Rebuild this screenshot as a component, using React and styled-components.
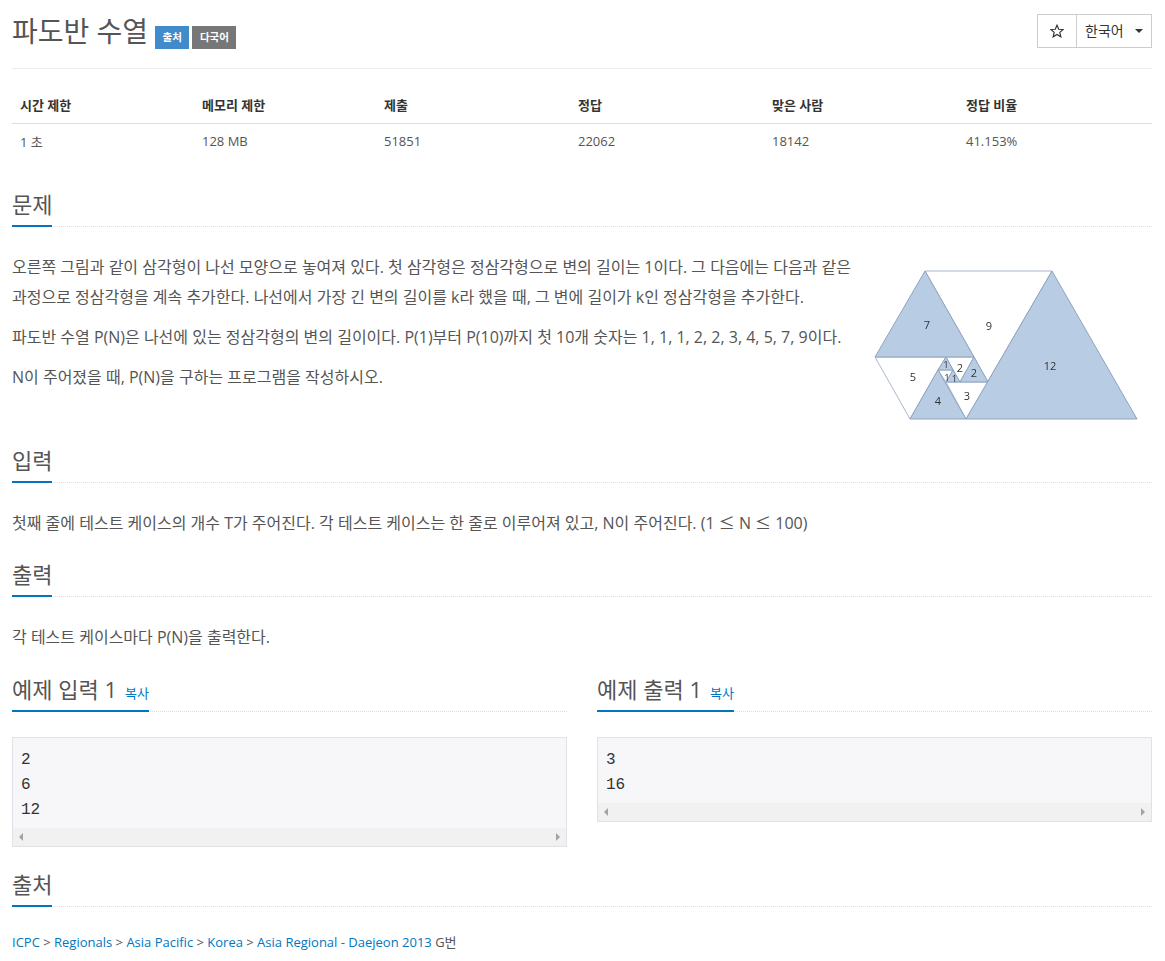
import React from 'react';

import styled, { createGlobalStyle } from 'styled-components';

const GlobalStyle = createGlobalStyle`
  html, body {
    margin: 0;
    padding: 0;
    background: #fff;
  }
  body {
    font-family: "Open Sans", "Noto Sans CJK KR", sans-serif;
    font-size: 13px;
    color: #555;
  }
`;

const Page = styled.div`
  width: 1140px;
  margin-left: 12px;
`;

const TitleBar = styled.div`
  display: flex;
  align-items: flex-start;
  justify-content: space-between;
  height: 68px;
  border-bottom: 1px solid #eee;
`;

const TitleLeft = styled.div`
  display: flex;
  align-items: flex-end;
  height: 49px;
`;

const Title = styled.h1`
  margin: 0 7px 0 0;
  padding-top: 13px;
  font-size: 28px;
  font-weight: 400;
  line-height: 36px;
  height: 36px;
`;

const Badge = styled.span`
  display: inline-block;
  height: 23px;
  line-height: 23px;
  padding: 0 7.5px;
  margin-right: 3px;
  background: ${p => p.bg};
  color: #fff;
  font-size: 10.5px;
  font-weight: 700;
`;

const ButtonGroup = styled.div`
  display: flex;
  box-sizing: border-box;
  height: 34px;
  margin-top: 14px;
  border: 1px solid #ccc;
`;

const StarButton = styled.div`
  display: flex;
  align-items: center;
  justify-content: center;
  box-sizing: border-box;
  width: 39px;
  border-right: 1px solid #ccc;
`;

const LangButton = styled.div`
  display: flex;
  align-items: center;
  width: 74px;
  padding: 0 0 2px 8px;
  box-sizing: border-box;
  font-size: 14px;
  color: #333;
`;

const Caret = styled.span`
  width: 0;
  height: 0;
  margin: 2px 0 0 11px;
  border-top: 4px solid #333;
  border-left: 4px solid transparent;
  border-right: 4px solid transparent;
`;

const InfoTable = styled.table`
  width: 100%;
  margin-top: 19px;
  border-collapse: collapse;
  table-layout: fixed;
`;

const Th = styled.th`
  width: ${p => p.w}px;
  height: 35px;
  padding: 0 8px 2px;
  box-sizing: border-box;
  border-bottom: 1px solid #ddd;
  text-align: left;
  font-size: 13px;
  font-weight: 700;
  color: #333;
`;

const Td = styled.td`
  height: 35px;
  padding: 0 8px;
  font-size: 13px;
  color: #555;
`;

const Section = styled.section`
  margin-top: ${p => p.top}px;
`;

const HeadlineRow = styled.div`
  display: flex;
  border-bottom: 1px dotted #ddd;
`;

const Headline = styled.h2`
  display: flex;
  align-items: baseline;
  margin: 0 0 -1px;
  height: 44px;
  line-height: 42px;
  box-sizing: border-box;
  font-size: 22px;
  font-weight: 400;
  color: #555;
  border-bottom: 2px solid #0076c0;
`;

const CopyLink = styled.a`
  margin-left: 8px;
  font-size: 13px;
  color: #0076c0;
`;

const ProblemBody = styled.div`
  display: flex;
  justify-content: space-between;
  margin-top: 25px;
`;

const TextColumn = styled.div`
  width: 845px;
`;

const Paragraph = styled.p`
  margin: 0 0 10px;
  font-size: 16px;
  line-height: 30px;
  color: #555;
`;

const MathSign = styled.span`
  font-family: "Noto Sans CJK KR", sans-serif;
  font-size: 16px;
  line-height: 20px;
`;

const Figure = styled.svg`
  display: block;
  flex: none;
  width: 290px;
  height: 175px;
  margin: 3px 2px 0 0;
  filter: blur(0.3px);
`;

const SampleColumns = styled.div`
  display: grid;
  grid-template-columns: 1fr 1fr;
  gap: 30px;
  align-items: start;
  margin-top: 6px;
`;

const SampleBox = styled.div`
  margin-top: 25px;
  border: 1px solid #e1e1e8;
  background: #f7f7f9;
`;

const SamplePre = styled.pre`
  margin: 0;
  padding: 10px 8px 5px;
  font-family: "Liberation Mono", "DejaVu Sans Mono", monospace;
  font-size: 16px;
  line-height: 25px;
  color: #333;
`;

const FakeScrollbar = styled.div`
  display: flex;
  align-items: center;
  justify-content: space-between;
  height: 18px;
  padding: 0 6px;
  background: #f1f1f1;
`;

const ScrollArrow = styled.span`
  width: 0;
  height: 0;
  border-top: 4px solid transparent;
  border-bottom: 4px solid transparent;
  border-${p => (p.dir === 'left' ? 'right' : 'left')}: 4px solid #a3a3a3;
`;

const SourceLine = styled.div`
  margin-top: 24px;
  font-size: 13px;
  line-height: 22px;
  color: #555;
`;

const SourceLink = styled.a`
  color: #0076c0;
`;

const stats = [
  ['시간 제한', '1 초', 182],
  ['메모리 제한', '128 MB', 182],
  ['제출', '51851', 194],
  ['정답', '22062', 194],
  ['맞은 사람', '18142', 194],
  ['정답 비율', '41.153%', 194],
];

const blue = '#b8cce4';
const blueEdge = '#8fa3bf';
const whiteEdge = '#a8b7cc';

// 좌표는 그림 왼쪽 위(860,255) 기준. 파란 삼각형이 위로 오도록 흰 것부터 그린다
const whiteTriangles = [
  '65,16 192,16 106,164 128,127 114,102',
  '15,102 86,102 78,115 50,164',
  '86,127 128,127 106,164',
  '86,102 114,102 100,127',
  '78,115 93,115 86,127',
];

const blueTriangles = [
  '65,16 15,102 114,102',
  '192,16 106,164 277,164',
  '78,115 50,164 106,164',
  '114,102 100,127 128,127',
  '86,102 78,115 93,115',
  '93,115 86,127 100,127',
];

const labels = [
  ['7', 67, 74, 11],
  ['9', 129, 75, 11],
  ['12', 190, 115, 11],
  ['5', 53, 126, 11],
  ['4', 78, 150, 11],
  ['3', 107, 145, 11],
  ['2', 100, 117, 11],
  ['2', 114, 122, 11],
  ['1', 86, 113, 9.5],
  ['1', 87, 125.5, 9.5],
  ['1', 94.5, 127, 9.5],
];

const SpiralFigure = () => (
  <Figure viewBox="0 0 290 175">
    {whiteTriangles.map(points => (
      <polygon key={points} points={points} fill="#fff" stroke={whiteEdge} strokeWidth="1" strokeLinejoin="round" />
    ))}
    {blueTriangles.map(points => (
      <polygon key={points} points={points} fill={blue} stroke={blueEdge} strokeWidth="1" strokeLinejoin="round" />
    ))}
    {labels.map(([text, x, y, size], i) => (
      <text key={i} x={x} y={y} fontSize={size} fill="#333" textAnchor="middle" fontFamily="Open Sans, sans-serif">
        {text}
      </text>
    ))}
  </Figure>
);

const Sample = ({ title, lines }) => (
  <div>
    <HeadlineRow>
      <Headline>
        {title}
        <CopyLink>복사</CopyLink>
      </Headline>
    </HeadlineRow>
    <SampleBox>
      <SamplePre>{lines}</SamplePre>
      <FakeScrollbar>
        <ScrollArrow dir="left" />
        <ScrollArrow dir="right" />
      </FakeScrollbar>
    </SampleBox>
  </div>
);

const App = () => (
  <Page>
    <GlobalStyle />
    <TitleBar>
      <TitleLeft>
        <Title>파도반 수열</Title>
        <Badge bg="#428bca">출처</Badge>
        <Badge bg="#777">다국어</Badge>
      </TitleLeft>
      <ButtonGroup>
        <StarButton>
          <svg width="14" height="14" viewBox="0 0 24 24" fill="none" stroke="#333" strokeWidth="2">
            <polygon points="12,2 15,9 22.5,9.5 16.8,14.4 18.6,22 12,17.8 5.4,22 7.2,14.4 1.5,9.5 9,9" />
          </svg>
        </StarButton>
        <LangButton>
          한국어
          <Caret />
        </LangButton>
      </ButtonGroup>
    </TitleBar>

    <InfoTable>
      <thead>
        <tr>
          {stats.map(([head, , w]) => (
            <Th key={head} w={w}>{head}</Th>
          ))}
        </tr>
      </thead>
      <tbody>
        <tr>
          {stats.map(([head, value]) => (
            <Td key={head}>{value}</Td>
          ))}
        </tr>
      </tbody>
    </InfoTable>

    <Section top={24}>
      <HeadlineRow>
        <Headline>문제</Headline>
      </HeadlineRow>
      <ProblemBody>
        <TextColumn>
          <Paragraph>
            오른쪽 그림과 같이 삼각형이 나선 모양으로 놓여져 있다. 첫 삼각형은 정삼각형으로 변의 길이는 1이다. 그 다음에는 다음과 같은 과정으로 정삼각형을 계속 추가한다. 나선에서 가장 긴 변의 길이를 k라 했을 때, 그 변에 길이가 k인 정삼각형을 추가한다.
          </Paragraph>
          <Paragraph>
            파도반 수열 P(N)은 나선에 있는 정삼각형의 변의 길이이다. P(1)부터 P(10)까지 첫 10개 숫자는 1, 1, 1, 2, 2, 3, 4, 5, 7, 9이다.
          </Paragraph>
          <Paragraph>N이 주어졌을 때, P(N)을 구하는 프로그램을 작성하시오.</Paragraph>
        </TextColumn>
        <SpiralFigure />
      </ProblemBody>
    </Section>

    <Section top={9}>
      <HeadlineRow>
        <Headline>입력</Headline>
      </HeadlineRow>
      <ProblemBody>
        <Paragraph>
          첫째 줄에 테스트 케이스의 개수 T가 주어진다. 각 테스트 케이스는 한 줄로 이루어져 있고, N이 주어진다. (1 <MathSign>≤</MathSign> N <MathSign>≤</MathSign> 100)
        </Paragraph>
      </ProblemBody>
    </Section>

    <Section top={5}>
      <HeadlineRow>
        <Headline>출력</Headline>
      </HeadlineRow>
      <ProblemBody>
        <Paragraph>각 테스트 케이스마다 P(N)을 출력한다.</Paragraph>
      </ProblemBody>
    </Section>

    <SampleColumns>
      <Sample title="예제 입력 1" lines={'2\n6\n12'} />
      <Sample title="예제 출력 1" lines={'3\n16'} />
    </SampleColumns>

    <Section top={16}>
      <HeadlineRow>
        <Headline>출처</Headline>
      </HeadlineRow>
      <SourceLine>
        <SourceLink>ICPC</SourceLink> &gt; <SourceLink>Regionals</SourceLink> &gt; <SourceLink>Asia Pacific</SourceLink> &gt; <SourceLink>Korea</SourceLink> &gt; <SourceLink>Asia Regional - Daejeon 2013</SourceLink> G번
      </SourceLine>
    </Section>
  </Page>
);

export default App;
